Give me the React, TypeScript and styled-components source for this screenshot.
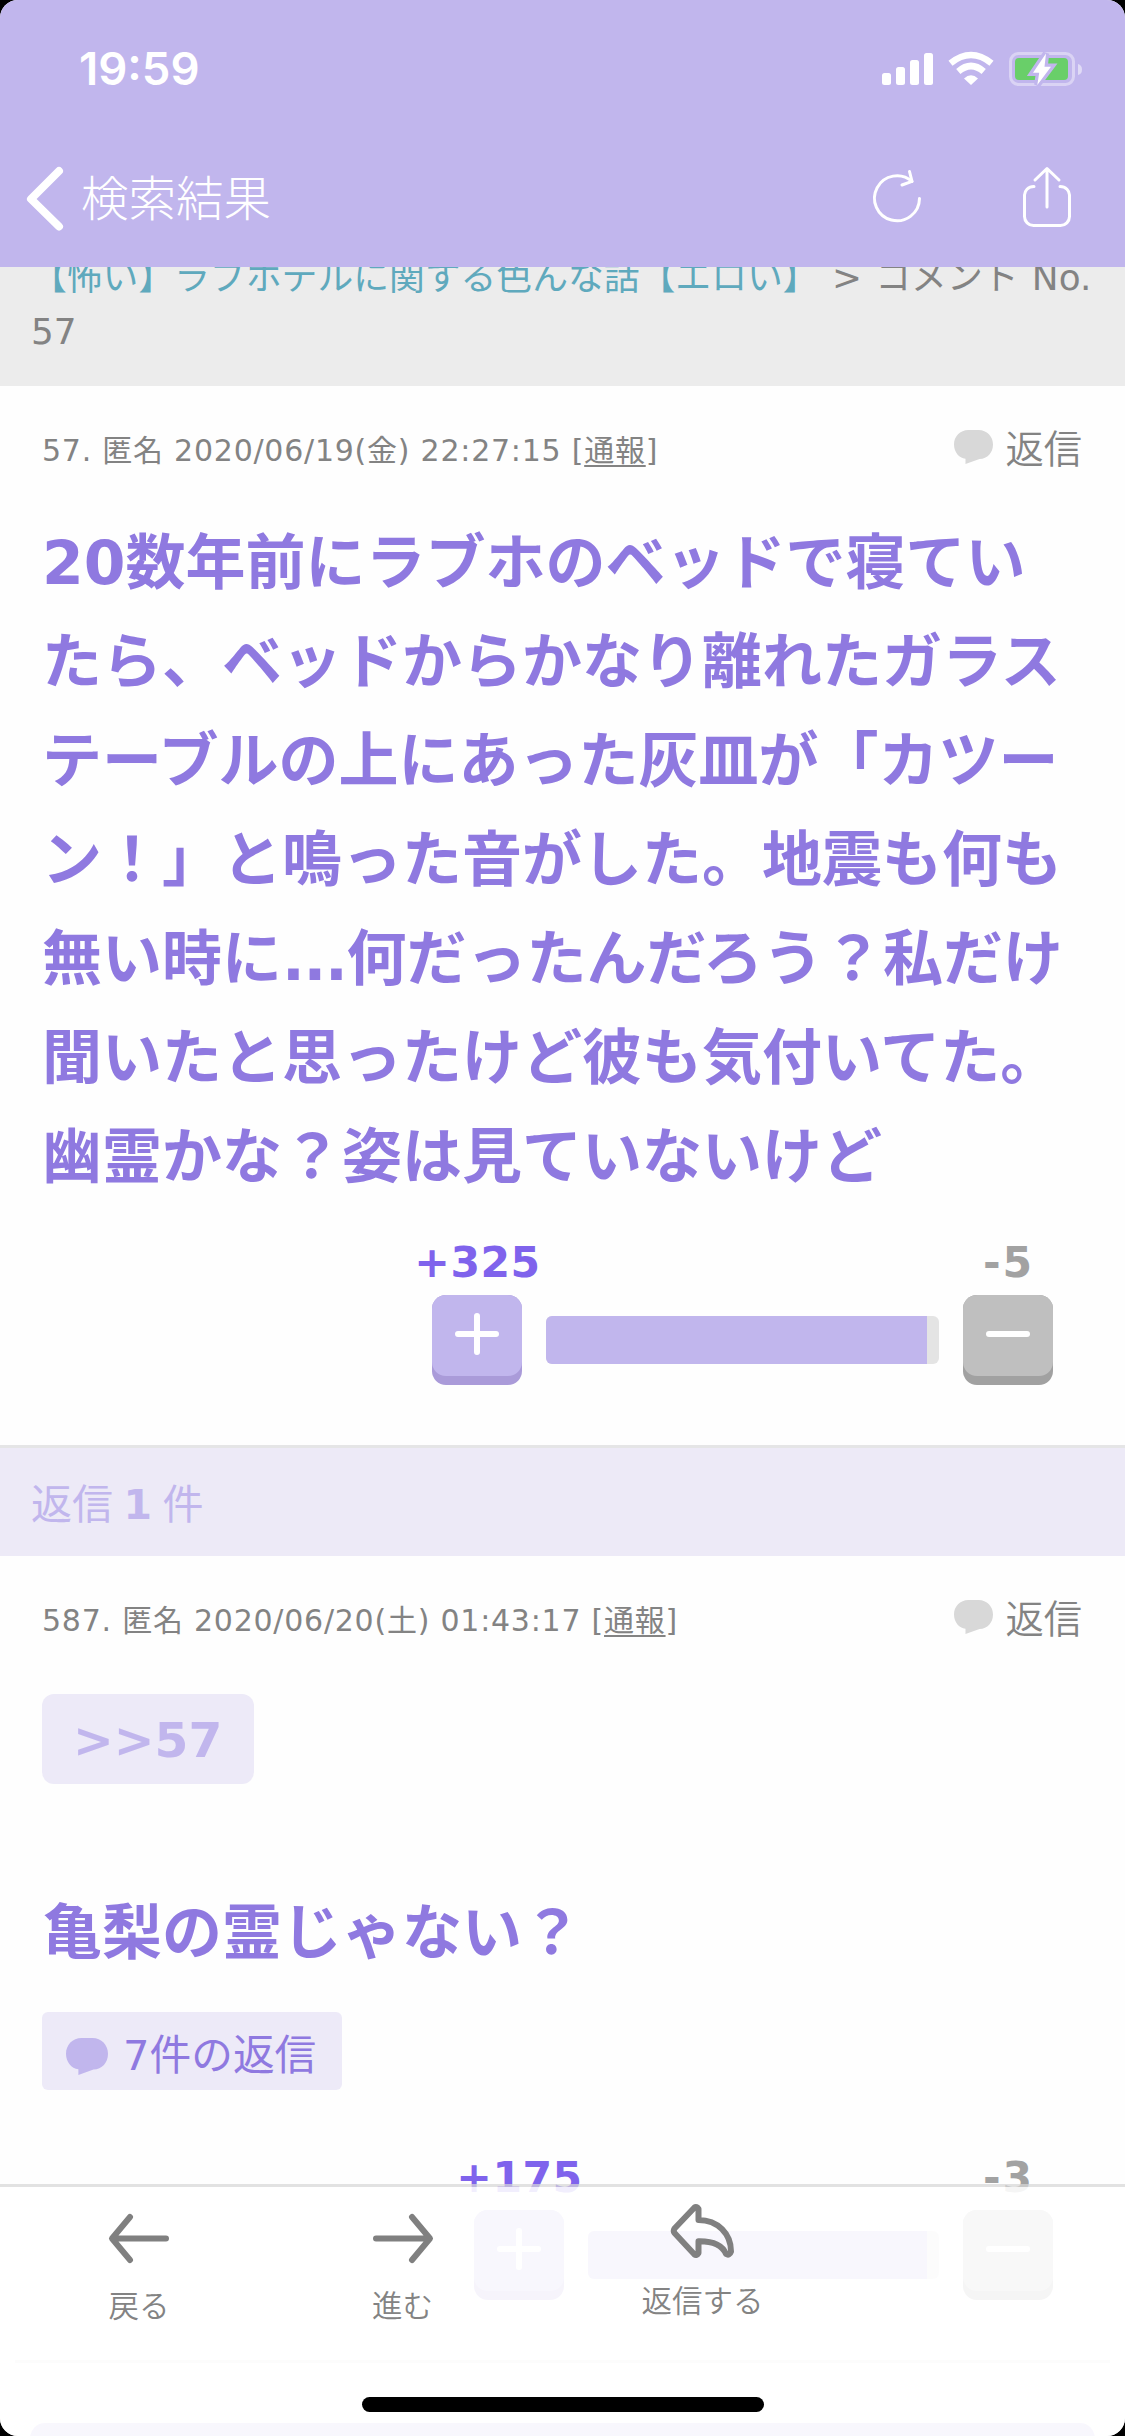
import React from 'react';
import styled, { createGlobalStyle } from 'styled-components';

const Global = createGlobalStyle`
  * { box-sizing: border-box; }
  html, body { margin: 0; background: #000; }
  body {
    font-family: "DejaVu Sans", "Noto Sans CJK JP", sans-serif;
    color: #838383;
  }
`;

const Screen = styled.div`
  position: relative;
  width: 1125px;
  height: 2436px;
  overflow: hidden;
  border-radius: 18px;
  background: #fefefe;
  display: flex;
  flex-direction: column;
`;

const Header = styled.header`
  flex: none;
  height: 267px;
  background: #c1b6ed;
  color: #fff;
  position: relative;
  z-index: 1;
`;

const StatusBar = styled.div`
  height: 134px;
  padding: 42px 43px 0 79px;
  display: flex;
  justify-content: space-between;
`;

const Clock = styled.div`
  font: 600 45.5px/54px Inter, sans-serif;
`;

const StatusIcons = styled.svg`
  display: block;
  width: 202px;
  height: 36px;
  margin-top: 9px;
`;

const NavBar = styled.div`
  height: 133px;
  padding: 0 54px 7px 27px;
  display: flex;
  align-items: center;
`;

const Title = styled.h1`
  flex: 1;
  margin: 0 0 2px 18px;
  font: 300 47.5px/60px "Noto Sans CJK JP", sans-serif;
`;

const Icon = styled.svg<{ $ml?: number; $mt?: number }>`
  display: block;
  flex: none;
  margin-left: ${(p) => p.$ml ?? 0}px;
  margin-top: ${(p) => p.$mt ?? 0}px;
  overflow: visible;
`;

const Crumbs = styled.nav`
  flex: none;
  height: 119px;
  background: #ececec;
  display: flex;
  flex-direction: column;
  justify-content: flex-end;
  padding: 0 0 27px 31px;
`;

const CrumbLine = styled.div`
  flex: none;
  font-size: 35.8px;
  line-height: 54px;
  word-spacing: 2px;
  white-space: pre;
`;

const CrumbLink = styled.a`
  color: #5fa9bd;
`;

const Post = styled.article<{ $height?: number }>`
  flex: none;
  height: ${(p) => (p.$height ? `${p.$height}px` : 'auto')};
  padding: 0 42px;
`;

const PostHead = styled.div`
  height: 126px;
  display: flex;
  justify-content: space-between;
  align-items: center;
`;

const Meta = styled.div`
  margin-top: 3px;
  font-size: 30px;
  letter-spacing: 0.76px;
  line-height: 44px;
  white-space: pre;
`;

const Report = styled.a`
  text-decoration: underline;
  text-decoration-thickness: 2px;
  text-underline-offset: 4px;
`;

const Reply = styled.a`
  display: flex;
  align-items: center;
  gap: 12px;
  margin: 0 1px 4px 0;
  font: 350 38.3px/44px "Noto Sans CJK JP", sans-serif;
`;

const Body = styled.p<{ $top: number }>`
  margin: ${(p) => p.$top}px 0 0;
  font-size: 60px;
  font-weight: 700;
  line-height: 99px;
  color: #8f79e0;
  white-space: nowrap;
`;

const Dots = styled.span`
  letter-spacing: -1.3px;
`;

const Quote = styled.a`
  display: flex;
  align-items: center;
  width: 212px;
  height: 90px;
  margin-top: 12px;
  padding: 2px 0 0 31px;
  border-radius: 12px;
  background: #edeaf8;
  color: #c1b6ed;
  font-size: 48.7px;
  font-weight: 700;
`;

const Replies = styled.a`
  display: flex;
  align-items: center;
  gap: 15px;
  width: 300px;
  height: 78px;
  margin-top: 29px;
  padding: 10px 0 0 24px;
  border-radius: 6px;
  background: #edeaf8;
  color: #8f79e0;
  font-size: 41.7px;
  line-height: 60px;
  white-space: nowrap;
`;

const Votes = styled.div<{ $top: number }>`
  display: flex;
  justify-content: flex-end;
  gap: 24px;
  margin: ${(p) => p.$top}px 30px 0 0;
`;

const Vote = styled.div`
  width: 90px;
  display: flex;
  flex-direction: column;
  align-items: center;
`;

const Count = styled.div<{ $color: string; $spacing: number }>`
  height: 60px;
  padding-left: 1px;
  font-size: 42.5px;
  font-weight: 700;
  line-height: 56px;
  letter-spacing: ${(p) => p.$spacing}px;
  color: ${(p) => p.$color};
  white-space: nowrap;
`;

const Key = styled.div<{ $face: string; $edge: string }>`
  width: 90px;
  height: 90px;
  padding-bottom: 9px;
  border-radius: 14px;
  background: ${(p) => p.$edge};

  > div {
    height: 81px;
    border-radius: 14px;
    background: ${(p) => p.$face};
    display: flex;
    justify-content: center;
    padding-top: 18px;
  }
`;

const Meter = styled.div<{ $width: number }>`
  width: ${(p) => p.$width}px;
  height: 48px;
  margin-top: 81px;
  padding-right: 12px;
  border-radius: 6px;
  background: #e4e4e4;
  overflow: hidden;

  > div {
    height: 48px;
    background: #c1b6ed;
  }
`;

const RepliesTitle = styled.h2`
  flex: none;
  height: 111px;
  margin: 0;
  padding: 10px 31px 0;
  border-top: 3px solid #e5e5e6;
  background: #edeaf7;
  color: #c1b6ed;
  font-size: 41px;
  font-weight: 400;
  line-height: 95px;
  word-spacing: -2.5px;
  white-space: pre;
`;

const Divider = styled.div`
  flex: none;
  height: 3px;
  margin: 0 15px;
  background: #e4e4e4;
`;

const NextCard = styled.div`
  flex: none;
  height: 60px;
  margin: 60px 30px 0;
  border-radius: 15px;
  background: #c1b6ed;
`;

const Toolbar = styled.footer`
  position: absolute;
  left: 0;
  right: 0;
  bottom: 0;
  height: 252px;
  border-top: 3px solid rgba(215, 215, 215, 0.72);
  background: rgba(255, 255, 255, 0.89);
  background-clip: padding-box;
`;

const Tools = styled.div`
  display: flex;
  align-items: flex-start;
  height: 175px;
  padding-left: 59px;
`;

const Tool = styled.a<{ $width: number; $pad: number }>`
  width: ${(p) => p.$width}px;
  padding-top: ${(p) => p.$pad}px;
  display: flex;
  flex-direction: column;
  align-items: center;
  font: 350 30.5px/44px "Noto Sans CJK JP", sans-serif;
  white-space: nowrap;
`;

const ToolLabel = styled.span`
  margin-top: 19px;
`;

const HomeBar = styled.div`
  position: absolute;
  left: 362px;
  bottom: 24px;
  width: 402px;
  height: 15px;
  border-radius: 8px;
  background: #000;
`;

const Bubble = ({ color, width, height }: { color: string; width: number; height: number }) => (
  <Icon width={width} height={height} viewBox="0 0 39 34" preserveAspectRatio="none">
    <path
      fill={color}
      d="M14.500 0h10C33 0 39 6.500 39 14.500S33.500 29 25.500 29L11.500 34v-5.200C5 28 0 22 0 14.500 0 6.500 6 0 14.500 0z"
    />
  </Icon>
);

const Sign = ({ plus }: { plus?: boolean }) => (
  <Icon width={44} height={42} viewBox="0 0 44 42" fill="none" stroke="#fff" strokeWidth={6} strokeLinecap="round">
    <path d={plus ? 'M3 21h38M22 3v36' : 'M3 21h38'} />
  </Icon>
);

type VoteRowProps = { up: string; down: string; width: number; top: number };

const VoteRow = ({ up, down, width, top }: VoteRowProps) => (
  <Votes $top={top}>
    <Vote>
      <Count $color="#7f63ec" $spacing={0.5}>{up}</Count>
      <Key $face="#c1b6ed" $edge="#aa9bd9">
        <div><Sign plus /></div>
      </Key>
    </Vote>
    <Meter $width={width}><div /></Meter>
    <Vote>
      <Count $color="#a2a2a2" $spacing={2}>{down}</Count>
      <Key $face="#bfbfbf" $edge="#a1a1a1">
        <div><Sign /></div>
      </Key>
    </Vote>
  </Votes>
);

const Head = ({ before }: { before: string }) => (
  <PostHead>
    <Meta>{before} [<Report>通報</Report>]</Meta>
    <Reply><Bubble color="#d8d8d8" width={39} height={34} />返信</Reply>
  </PostHead>
);

const lines: React.ReactNode[] = [
  '20数年前にラブホのベッドで寝てい',
  'たら、ベッドからかなり離れたガラス',
  'テーブルの上にあった灰皿が「カツー',
  'ン！」と鳴った音がした。地震も何も',
  <>無い時に<Dots>...</Dots>何だったんだろう？私だけ</>,
  '聞いたと思ったけど彼も気付いてた。',
  '幽霊かな？姿は見ていないけど',
];

export default function App() {
  return (
    <>
      <Global />
      <Screen>
        <Header>
          <StatusBar>
            <Clock>19:59</Clock>
            <StatusIcons viewBox="0 0 202 36">
              <g fill="#fff">
                <rect x="2" y="22" width="9" height="12" rx="2.500" />
                <rect x="16" y="16" width="9" height="18" rx="2.500" />
                <rect x="30" y="9" width="9" height="25" rx="2.500" />
                <rect x="44" y="2" width="9" height="32" rx="2.500" />
                <path d="M91 34l-7-6.500q7-6.500 14 0z" />
              </g>
              <g fill="none" stroke="#fff" strokeWidth="6.500">
                <path d="M70.500 12.200Q91-4.200 111.500 12.200" />
                <path d="M78.300 20.500Q91 9.500 103.700 20.500" />
              </g>
              <rect x="130.500" y="2.500" width="63" height="31" rx="8" fill="none" stroke="#fff" strokeOpacity=".4" strokeWidth="3" />
              <path d="M198 13q4 1 4 5.500t-4 5.500z" fill="#fff" fillOpacity=".5" />
              <rect x="135" y="7" width="53" height="22" rx="4" fill="#69cf69" />
              <path d="M166 2.500L153 21.700h6.200L157.300 34 171 15.700h-6.500z" fill="#fff" stroke="#c1b6ed" strokeWidth="6.500" paintOrder="stroke" />
            </StatusIcons>
          </StatusBar>
          <NavBar>
            <Icon $mt={3} width={36} height={64} viewBox="0 0 36 64" fill="none" stroke="#fff" strokeWidth={8} strokeLinecap="round" strokeLinejoin="round">
              <path d="M32 4L4 32l28 27.500" />
            </Icon>
            <Title>検索結果</Title>
            <Icon width={48} height={54} viewBox="0 0 48 54" fill="none" stroke="#fff" strokeWidth={3} strokeLinecap="round" strokeLinejoin="round">
              <path d="M46.500 28.500A22.500 22.500 0 1 1 39 11.500" />
              <path d="M36.500 1.500l2.500 9.800-10 3.700" />
            </Icon>
            <Icon $ml={102} width={48} height={60} viewBox="0 0 48 60" fill="none" stroke="#fff" strokeWidth={3} strokeLinecap="round" strokeLinejoin="round">
              <path d="M11 19.500C5 19.500 1.500 24 1.500 28v21.500a9 9 0 0 0 9 9h27a9 9 0 0 0 9-9V28c0-4-3.500-8.500-9.500-8.500" />
              <path d="M24 40V2M12 13L24 1.500 36 13" />
            </Icon>
          </NavBar>
        </Header>

        <Crumbs>
          <CrumbLine><CrumbLink>【怖い】ラブホテルに関する色んな話【エロい】</CrumbLink> &gt; コメント No.</CrumbLine>
          <CrumbLine>57</CrumbLine>
        </Crumbs>

        <Post $height={1059}>
          <Head before="57. 匿名 2020/06/19(金) 22:27:15" />
          <Body $top={2}>
            {lines.map((line, i) => (
              <React.Fragment key={i}>{line}<br /></React.Fragment>
            ))}
          </Body>
          <VoteRow up="+325" down="-5" width={393} top={28} />
        </Post>

        <RepliesTitle>返信 <b>1</b> 件</RepliesTitle>

        <Post $height={804}>
          <Head before="587. 匿名 2020/06/20(土) 01:43:17" />
          <Quote>&gt;&gt;57</Quote>
          <Body $top={100}>亀梨の霊じゃない？</Body>
          <Replies><Bubble color="#c1b6ed" width={42} height={37} />7件の返信</Replies>
          <VoteRow up="+175" down="-3" width={351} top={60} />
        </Post>
        <Divider />
        <NextCard />

        <Toolbar>
          <Tools>
            <Tool $width={160} $pad={27}>
              <Icon width={60} height={49} viewBox="0 0 60 49" fill="none" stroke="#808080" strokeWidth={6} strokeLinecap="round" strokeLinejoin="round">
                <path d="M57 24.500H4M21 3L3 24.500 21 46" />
              </Icon>
              <ToolLabel>戻る</ToolLabel>
            </Tool>
            <Tool $width={367} $pad={27}>
              <Icon width={60} height={49} viewBox="0 0 60 49" fill="none" stroke="#808080" strokeWidth={6} strokeLinecap="round" strokeLinejoin="round">
                <path d="M3 24.500h53M39 3l18 21.500L39 46" />
              </Icon>
              <ToolLabel>進む</ToolLabel>
            </Tool>
            <Tool $width={233} $pad={17}>
              <Icon width={64} height={54} viewBox="0 0 64 54" fill="none" stroke="#808080" strokeWidth={6} strokeLinecap="round" strokeLinejoin="round">
                <path d="M23.500 3.500Q25.500 2 27.500 5v11C47 16 60 30 60 47.500q-1.500 4.500-5 2.500C51 40 41 37 27.500 37.200V49q-2 3-4 1.500L3.500 29Q2 27 3.500 24.500z" />
              </Icon>
              <ToolLabel>返信する</ToolLabel>
            </Tool>
          </Tools>
          <HomeBar />
        </Toolbar>
      </Screen>
    </>
  );
}
